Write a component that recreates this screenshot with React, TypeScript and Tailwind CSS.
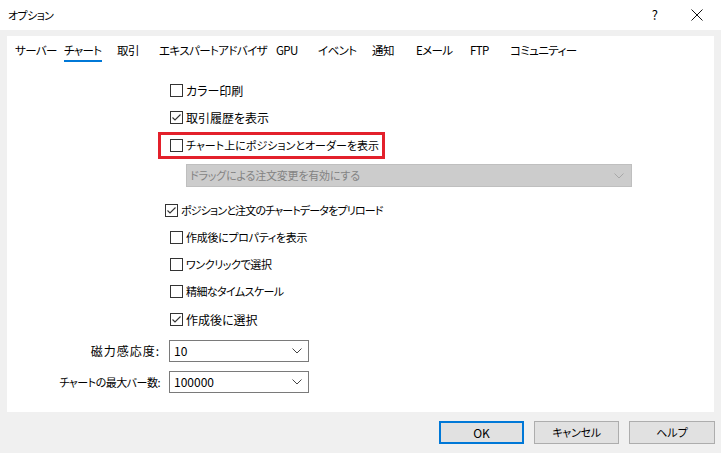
import React from 'react';

const font = "font-['Noto_Sans_CJK_JP','Noto_Sans',sans-serif] [font-feature-settings:'palt']";

const tabs: { label: string; w: string; active?: boolean }[] = [
    { label: 'サーバー', w: 'w-[49px]' },
    { label: 'チャート', w: 'w-[53px]', active: true },
    { label: '取引', w: 'w-[42px]' },
    { label: 'エキスパートアドバイザ', w: 'w-[117px]' },
    { label: 'GPU', w: 'w-[42px]' },
    { label: 'イベント', w: 'w-[54px]' },
    { label: '通知', w: 'w-[44px]' },
    { label: 'Eメール', w: 'w-[54px]' },
    { label: 'FTP', w: 'w-[40px]' },
    { label: 'コミュニティー', w: 'w-auto' },
];

const Box = ({ checked }: { checked?: boolean }) => (
    <span className="w-[13px] h-[13px] border border-[#333333] bg-white shrink-0 flex items-center justify-center">
        {checked && (
            <svg width="11" height="11" viewBox="0 0 11 11">
                <polyline points="1.5,5.5 4,8 9.5,2.5" fill="none" stroke="#333333" strokeWidth="1.1" />
            </svg>
        )}
    </span>
);

// text: font size + tracking per label, the original UI font has narrow kana
const Check = ({ label, checked, cls, text }: { label: string; checked?: boolean; cls: string; text: string }) => (
    <div className={`flex items-center h-[13px] gap-[3px] ${cls}`}>
        <Box checked={checked} />
        <span className={`${text} leading-[13px] text-black whitespace-nowrap`}>{label}</span>
    </div>
);

const Chevron = ({ color }: { color: string }) => (
    <svg width="10" height="6" viewBox="0 0 10 6">
        <polyline points="0.5,0.5 5,5 9.5,0.5" fill="none" stroke={color} strokeWidth="1" />
    </svg>
);

const Select = ({ value }: { value: string }) => (
    <div className="w-[140px] h-[22px] border border-[#7a7a7a] bg-white flex items-center justify-between pl-[4px] pr-[6px]">
        <span className="text-[12px] text-black">{value}</span>
        <Chevron color="#444444" />
    </div>
);

export default function App() {
    return (
        <div className={`w-[721px] h-[453px] bg-[#f0f0f0] flex flex-col ${font}`}>
            <div className="h-[30px] bg-white flex items-center pl-[8px] text-black">
                <span className="text-[11px] tracking-[-0.6px]">オプション</span>
                <span className="ml-auto mr-[33px] text-[13px]">?</span>
                <svg width="12" height="12" viewBox="0 0 12 12" className="mr-[18px]">
                    <path d="M0.5 0.5 L11.5 11.5 M11.5 0.5 L0.5 11.5" stroke="#111111" strokeWidth="1" />
                </svg>
            </div>

            <div className="mx-[7px] mt-[6px] h-[376px] bg-white flex flex-col">
                <div className="flex pl-[8px] h-[23px]">
                    {tabs.map((t) => (
                        <div key={t.label} className={`${t.w} shrink-0`}>
                            <span
                                className={`inline-block pt-[4px] pb-[2px] text-[11.5px] tracking-[-0.6px] leading-[15px] text-black whitespace-nowrap border-b-2 ${
                                    t.active ? 'border-[#0078d7]' : 'border-transparent'
                                }`}
                            >
                                {t.label}
                            </span>
                        </div>
                    ))}
                </div>

                <div className="flex flex-col pl-[151px]">
                    <Check label="カラー印刷" text="text-[12px]" cls="mt-[25px] ml-[12px]" />
                    <Check label="取引履歴を表示" text="text-[12px]" checked cls="mt-[14px] ml-[12px]" />
                    <div className="mt-[8px] w-[227px] h-[27px] border-[3px] border-[#e3202b] flex items-center pl-[9px]">
                        <Box />
                        <span className="ml-[3px] text-[11px] leading-[13px] text-black whitespace-nowrap">
                            チャート上にポジションとオーダーを表示
                        </span>
                    </div>
                    <div className="mt-[5px] ml-[28px] w-[446px] h-[23px] bg-[#cccccc] border border-[#bfbfbf] flex items-center justify-between pl-[3px] pr-[7px]">
                        <span className="text-[11px] tracking-[-0.2px] text-[#838383]">ドラッグによる注文変更を有効にする</span>
                        <Chevron color="#a8a8a8" />
                    </div>
                    <Check
                        label="ポジションと注文のチャートデータをプリロード"
                        text="text-[11px] tracking-[-0.85px]"
                        checked
                        cls="mt-[17px] ml-[7px]"
                    />
                    <Check label="作成後にプロパティを表示" text="text-[11px] tracking-[-0.3px]" cls="mt-[14px] ml-[12px]" />
                    <Check label="ワンクリックで選択" text="text-[11px] tracking-[-0.4px]" cls="mt-[14px] ml-[12px]" />
                    <Check label="精細なタイムスケール" text="text-[11px] tracking-[-0.6px]" cls="mt-[14px] ml-[12px]" />
                    <Check label="作成後に選択" text="text-[12px]" checked cls="mt-[15px] ml-[12px]" />
                </div>

                <div className="flex items-center mt-[14px] gap-[9px]">
                    <span className="w-[153px] text-right text-[12px] tracking-[1px] text-black">磁力感応度:</span>
                    <Select value="10" />
                </div>
                <div className="flex items-center mt-[9px] gap-[9px]">
                    <span className="w-[153px] text-right text-[11px] tracking-[-0.5px] text-black">チャートの最大バー数:</span>
                    <Select value="100000" />
                </div>
            </div>

            <div className="flex justify-end gap-[10px] mt-[9px] pr-[6px]">
                <button className="w-[85px] h-[23px] border-2 border-[#0078d7] bg-[#e1e1e1] text-[12px] text-black">OK</button>
                <button className="w-[85px] h-[23px] border border-[#adadad] bg-[#e1e1e1] text-[11px] tracking-[-0.3px] text-black">キャンセル</button>
                <button className="w-[86px] h-[23px] border border-[#adadad] bg-[#e1e1e1] text-[11px] text-black">ヘルプ</button>
            </div>
        </div>
    );
}
